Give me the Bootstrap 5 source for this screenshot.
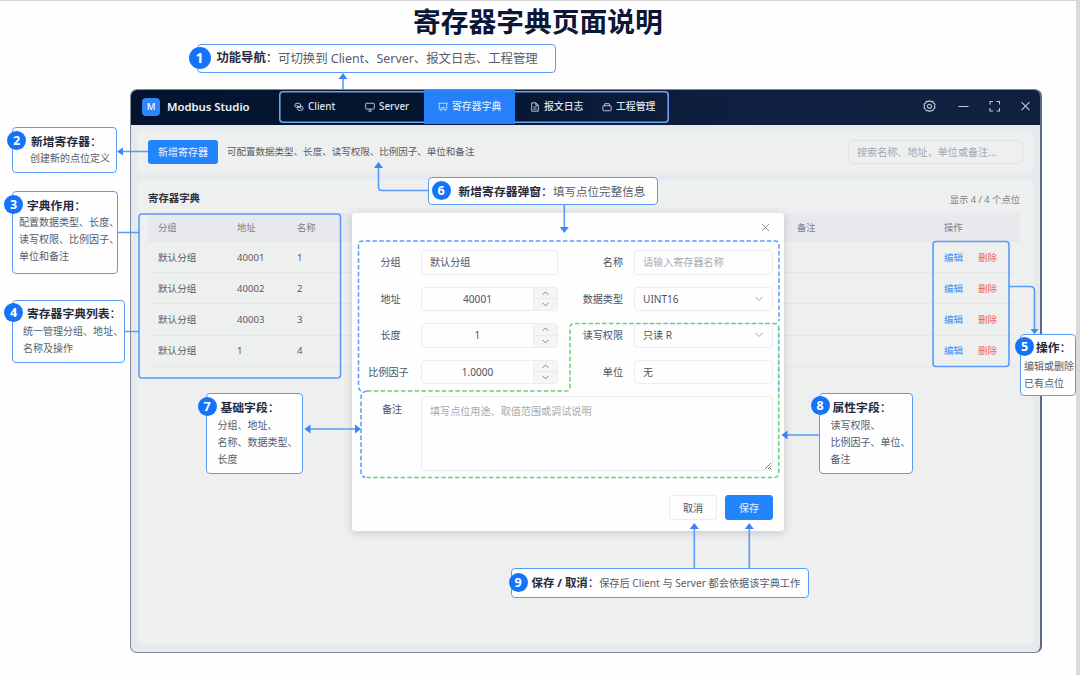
<!DOCTYPE html>
<html lang="zh-CN">
<head>
<meta charset="utf-8">
<meta name="viewport" content="width=device-width, initial-scale=1">
<title>寄存器字典页面说明</title>
<link href="https://cdn.jsdelivr.net/npm/bootstrap@5.3.0/dist/css/bootstrap.min.css" rel="stylesheet">
<style>
  :root { --line: #5b9bf8; --brand: #2385fb; --dot: #1473fb; }
  html, body { height: 675px; overflow: hidden; }
  body { font-family: "Noto Sans", "Noto Sans CJK SC", sans-serif; font-size: 9.6px; line-height: 1.4; color: #565b64; background: #fefefe; }
  .sheet { width: 1080px; height: 675px; border-top: 1px solid #d6d6d6; border-right: 4px solid #dadadb; padding-left: 130px; }
  .headline { font-size: 27.75px; font-weight: 700; line-height: 40px; color: #0c1635; margin: 0 0 48px 283px; }

  /* application window */
  .app { width: 912px; height: 564px; border: 1.5px solid #818a9c; border-right: 2px solid #5b6b85; border-radius: 7px; background: #e6e9ed; overflow: hidden; }
  .bar { height: 36px; margin: -1px -1px 0 -1px; background: linear-gradient(90deg, #04142f 0%, #06152f 35%, #102041 70%, #11203e 100%); color: #dfe5ef; }
  .logo { width: 18px; height: 18px; margin-left: 12px; border-radius: 4px; background: #2b87fb; color: #fff; font-size: 9.5px; font-weight: 500; }
  .product { width: 112px; margin-left: 7px; font-size: 11.3px; font-weight: 600; color: #f0f4fa; white-space: nowrap; }
  .tabs { width: 390px; height: 32px; font-size: 9.85px; font-weight: 500; box-shadow: inset 0 0 0 1.6px #6ea4ee; border-radius: 4px; }
  .tab { gap: 4px; padding-left: 15px; white-space: nowrap; }
  .tab svg { width: 10px; height: 10px; flex: none; }
  .t1 { width: 71px; } .t2 { width: 74px; } .t3 { width: 91px; } .t4 { width: 72px; }
  .t3 { height: 34px; padding-left: 14px; background: #2580fa; color: #d9eaff; border-radius: 0; }
  .sys { margin-right: 9px; color: #c3cad6; }
  .panel { background: #eeefef; border-radius: 4px; box-shadow: 0 0 2px #e9ebee; }
  .tools { height: 42px; margin: 6px 7px 0 6px; padding: 0 10px 0 11px; }
  .add { width: 70px; height: 24px; border-radius: 3px; background: var(--brand); color: #e8f2ff; font-size: 10px; }
  .hint { margin-left: 9px; font-size: 9.53px; }
  .find { width: 175px; height: 24px; border: 1px solid #e2e4e6; border-radius: 4px; padding-left: 8px; font-size: 10.1px; color: #a4a8ae; }
  .dict { height: 464px; margin: 7px 7px 0 6px; padding: 9px 13px 0 11px; }
  .dict h2 { font-size: 10.4px; font-weight: 700; color: #2c313c; line-height: 18px; }
  .total { padding-top: 4px; color: #7c8087; font-size: 9.3px; }
  .grid { grid-template-columns: 79px 60px 500px 147px 34px 1fr; padding: 1px 0 0 10px; height: 31.2px; border-bottom: 1px solid #e5e7e8; font-size: 9.6px; }
  .grid.hd { height: 29px; margin-top: 6px; background: #e8e9ec; color: #7c8087; font-size: 9.3px; }
  .ed { color: #3b8ef0; } .rm { color: #f26464; }

  /* dialog */
  .dlg { left: 352px; top: 213px; width: 432px; height: 318px; background: #fefefe; border-radius: 3px; box-shadow: 0 2px 9px rgba(60,70,90,.22); color: #4e535c; font-size: 10.1px; }
  .dlg .x { height: 37px; padding: 10px 14px 0 0; }
  .form { grid-template-columns: 61px 137px 76px 139px; grid-template-rows: repeat(4, 24.5px) 75px; row-gap: 12px; padding-left: 8px; }
  .lab { text-align: center; }
  .lab.r { text-align: right; padding-right: 11px; }
  .lab.top { align-self: start; padding: 6px 0 0 3px; }
  .fld { border: 1px solid #ebecee; border-radius: 4px; padding: 0 8px; background: #fefefe; }
  .ph { color: #a9abb0; }
  .num { padding: 0; overflow: hidden; }
  .step { width: 24px; background: #f5f5f6; border-left: 1px solid #eeeff0; color: #7b7f86; }
  .step svg + svg { border-top: 1px solid #e9eaec; }
  .area { grid-column: 2 / 5; position: relative; padding-top: 7px; }
  .area svg { position: absolute; right: 0; bottom: 0; }
  .act { gap: 8px; padding: 24px 11px 0 0; }
  .act span { width: 48px; height: 25px; border-radius: 3px; border: 1px solid #ececee; padding-top: 1px; }
  .act .ok { background: var(--brand); border-color: var(--brand); color: #e6f1ff; }

  /* annotations */
  .lines { left: 0; top: 0; pointer-events: none; }
  .note { background: #fefefe; border: 1.5px solid var(--line); border-radius: 4px; white-space: nowrap; font-size: 10.03px; line-height: 17px; color: #575c6b; }
  .note b { display: block; font-size: 11.8px; font-weight: 700; line-height: 18px; color: #242a3c; }
  .note b span { font-weight: 400; }
  .note i { position: absolute; width: 19px; height: 19px; border-radius: 50%; background: var(--dot); color: #fff; font: 700 12.5px/19px "Noto Sans", sans-serif; text-align: center; }
  .note.one { display: flex; align-items: center; }
  .n1 { left: 196.5px; top: 44px; width: 359px; height: 28.5px; padding-left: 19px; font-size: 12.4px; }
  .n1 b { font-size: 12.3px; } .n1 i { left: -9px; top: 2px; width: 22px; height: 22px; font-size: 14px; line-height: 22px; }
  .n2 { left: 12px; top: 127px; width: 105px; height: 46px; padding: 4px 0 0 17px; }
  .n2 b { margin-left: 1px; } .n2 i { left: -6px; top: 3px; }
  .n3 { left: 12px; top: 191px; width: 106px; height: 82.5px; padding: 4px 0 0 6px; }
  .n3 b, .n4 b { margin-left: 8px; } .n3 i { left: -9px; top: 3px; }
  .n4 { left: 12px; top: 300px; width: 113px; height: 62.5px; padding: 4px 0 0 10px; }
  .n4 b { margin: -1px 0 1px 4px; } .n4 i { left: -9px; top: 2px; }
  .n5 { left: 1020px; top: 334px; width: 56px; height: 61.5px; padding: 3px 0 0 3px; }
  .n5 b { margin: 0 0 2px 12px; } .n5 i { left: -6px; top: 2px; }
  .n6 { left: 427.5px; top: 177px; width: 230.5px; height: 28px; padding-left: 30px; font-size: 11.55px; }
  .n6 i { left: 3px; top: 3px; }
  .n7 { left: 205.5px; top: 393px; width: 97.5px; height: 80.5px; padding: 4px 0 0 11px; }
  .n7 b { margin: 0 0 1px 3px; } .n7 i { left: -9px; top: 3px; }
  .n8 { left: 818.5px; top: 393px; width: 94.5px; height: 80.5px; padding: 4px 0 0 11px; }
  .n8 b { margin: 0 0 1px 2px; } .n8 i { left: -9px; top: 2px; }
  .n9 { left: 510.5px; top: 568px; width: 298.5px; height: 29.5px; padding: 1px 0 0 20px; font-size: 10.2px; }
  .n9 b { font-size: 11.4px; } .n9 i { left: -3px; top: 4px; }
</style>
</head>
<body>
<main class="sheet position-relative">
  <h1 class="headline">寄存器字典页面说明</h1>

  <section class="app">
    <header class="bar d-flex align-items-center">
      <span class="logo d-flex align-items-center justify-content-center">M</span>
      <span class="product">Modbus Studio</span>
      <nav class="tabs d-flex align-items-center">
        <span class="tab t1 d-flex align-items-center"><svg viewBox="0 0 12 12" fill="none" stroke="currentColor"><rect x="1" y="1.5" width="7" height="5" rx="2.5"/><rect x="4" y="5" width="7" height="5" rx="2.5"/><path d="M3 4l6 4"/></svg>Client</span>
        <span class="tab t2 d-flex align-items-center"><svg viewBox="0 0 12 12" fill="none" stroke="currentColor"><rect x=".8" y="1.5" width="10.4" height="7" rx="1"/><path d="M4 11h4M6 8.5V11"/></svg>Server</span>
        <span class="tab t3 d-flex align-items-center"><svg viewBox="0 0 12 12" fill="none" stroke="currentColor"><path d="M.5 1.500h11M1.500 1.500V8.500h9v-7M4 6.500h4M3 11l1-2.500M9 11L8 8.500"/></svg>寄存器字典</span>
        <span class="tab t4 d-flex align-items-center"><svg viewBox="0 0 12 12" fill="none" stroke="currentColor"><path d="M2 1h5l3 3v7H2zM7 1v3h3M4 6h4M4 8.500h4"/></svg>报文日志</span>
        <span class="tab d-flex align-items-center"><svg viewBox="0 0 12 12" fill="none" stroke="currentColor"><rect x="1" y="4.500" width="10" height="6" rx="1"/><path d="M2.500 4.500l1-2.500h5l1 2.500"/></svg>工程管理</span>
      </nav>
      <svg class="sys ms-auto" width="110" height="16" viewBox="0 0 110 16" fill="none" stroke="currentColor" stroke-width="1.100">
        <path d="M7.500 1.700l1.500.9 1.700-.2.900 1.700 1.400 1.200-.6 1.900.6 1.700-1.500 1.200-.8 1.600-1.800-.1-1.400.9-1.500-.9-1.700.1-.9-1.600L2 8.900l.6-1.700L2 5.300l1.400-1.200.9-1.700 1.700.2z"/><circle cx="7.500" cy="7.200" r="2"/>
        <path d="M36.500 7.500h10"/>
        <path d="M68 5.500v-3h3M74.500 2.500h3v3M77.500 9v3h-3M71 12h-3V9"/>
        <path d="M99.500 3.200l8 8M107.500 3.200l-8 8"/>
      </svg>
    </header>

    <div class="panel tools d-flex align-items-center">
      <span class="add d-flex align-items-center justify-content-center">新增寄存器</span>
      <span class="hint">可配置数据类型、长度、读写权限、比例因子、单位和备注</span>
      <span class="find d-flex align-items-center ms-auto">搜索名称、地址、单位或备注...</span>
    </div>

    <div class="panel dict">
      <div class="d-flex justify-content-between"><h2 class="m-0">寄存器字典</h2><span class="total">显示 4 / 4 个点位</span></div>
      <div class="grid hd d-grid align-items-center"><span>分组</span><span>地址</span><span>名称</span><span>备注</span><span>操作</span></div>
      <div class="grid d-grid align-items-center"><span>默认分组</span><span>40001</span><span>1</span><span></span><span class="ed">编辑</span><span class="rm">删除</span></div>
      <div class="grid d-grid align-items-center"><span>默认分组</span><span>40002</span><span>2</span><span></span><span class="ed">编辑</span><span class="rm">删除</span></div>
      <div class="grid d-grid align-items-center"><span>默认分组</span><span>40003</span><span>3</span><span></span><span class="ed">编辑</span><span class="rm">删除</span></div>
      <div class="grid d-grid align-items-center"><span>默认分组</span><span>1</span><span>4</span><span></span><span class="ed">编辑</span><span class="rm">删除</span></div>
    </div>
  </section>
</main>

<section class="dlg position-absolute">
  <div class="x d-flex justify-content-end"><svg width="9" height="9" viewBox="0 0 9 9" stroke="#8d9097" stroke-width="1"><path d="M1 1l7 7M8 1L1 8"/></svg></div>
  <div class="form d-grid align-items-center">
    <span class="lab">分组</span><span class="fld h-100 d-flex align-items-center">默认分组</span>
    <span class="lab r">名称</span><span class="fld h-100 d-flex align-items-center ph">请输入寄存器名称</span>

    <span class="lab">地址</span><span class="fld num h-100 d-flex"><span class="flex-grow-1 d-flex align-items-center justify-content-center">40001</span><span class="step d-flex flex-column"><svg class="flex-fill w-100" viewBox="0 0 24 11" fill="none" stroke="currentColor"><path d="M9 7l3-3 3 3"/></svg><svg class="flex-fill w-100" viewBox="0 0 24 11" fill="none" stroke="currentColor"><path d="M9 4l3 3 3-3"/></svg></span></span>
    <span class="lab r">数据类型</span><span class="fld h-100 d-flex align-items-center justify-content-between">UINT16<svg width="10" height="6" viewBox="0 0 10 6" fill="none" stroke="#a0a3a9"><path d="M1.500 1L5 4.500 8.500 1"/></svg></span>

    <span class="lab">长度</span><span class="fld num h-100 d-flex"><span class="flex-grow-1 d-flex align-items-center justify-content-center">1</span><span class="step d-flex flex-column"><svg class="flex-fill w-100" viewBox="0 0 24 11" fill="none" stroke="currentColor"><path d="M9 7l3-3 3 3"/></svg><svg class="flex-fill w-100" viewBox="0 0 24 11" fill="none" stroke="currentColor"><path d="M9 4l3 3 3-3"/></svg></span></span>
    <span class="lab r">读写权限</span><span class="fld h-100 d-flex align-items-center justify-content-between">只读 R<svg width="10" height="6" viewBox="0 0 10 6" fill="none" stroke="#a0a3a9"><path d="M1.500 1L5 4.500 8.500 1"/></svg></span>

    <span class="lab pe-1">比例因子</span><span class="fld num h-100 d-flex"><span class="flex-grow-1 d-flex align-items-center justify-content-center">1.0000</span><span class="step d-flex flex-column"><svg class="flex-fill w-100" viewBox="0 0 24 11" fill="none" stroke="currentColor"><path d="M9 7l3-3 3 3"/></svg><svg class="flex-fill w-100" viewBox="0 0 24 11" fill="none" stroke="currentColor"><path d="M9 4l3 3 3-3"/></svg></span></span>
    <span class="lab r">单位</span><span class="fld h-100 d-flex align-items-center ps-1"><span class="ms-1">无</span></span>

    <span class="lab top">备注</span><span class="fld area h-100 ph">填写点位用途、取值范围或调试说明<svg width="8" height="8" viewBox="0 0 8 8" stroke="#77797e"><path d="M1 7l6-6M4 7l3-3M6 7l1-1"/></svg></span>
  </div>
  <div class="act d-flex justify-content-end"><span class="d-flex align-items-center justify-content-center">取消</span><span class="ok d-flex align-items-center justify-content-center">保存</span></div>
</section>

<!-- connector lines and highlighted regions -->
<svg class="lines position-absolute" width="1080" height="675" viewBox="0 0 1080 675" fill="none" stroke="#5b9bf8" stroke-width="1.600">
  <rect x="139" y="214" width="201.500" height="164" rx="3"/>
  <rect x="933" y="241.500" width="76" height="125" rx="3"/>
  <path d="M343 90V78M148 151.500H121M118 232.500h21M125 331.500h14M1009 286.500h21q4.500 0 4.500 4.500v39M428 190.500h-46q-3.500 0-3.500-3.500V166M564.300 205v24M308 429h49M819 435h-34M694.300 568V528M749.300 568V528"/>
  <g fill="#3e83f7" stroke="none">
    <path d="M343 73l4.500 6h-9zM117 151.500l6-4v8zM1034.500 334l-4-5h8zM378.500 162l4.500 6h-9zM564.300 233l-4.500-6h9zM304.500 429l6-4.500v9zM361 429l-6-4.500v9zM781.500 435l6-4.500v9zM694.300 523l4.500 6h-9zM749.300 523l4.500 6h-9z"/>
  </g>
  <g stroke-dasharray="4.500 2.300" stroke-width="1.500">
    <path d="M361 391q-2.500-1-2.500-5V245q0-4 4-4H775q4 0 4 4v76"/>
    <path d="M367 391q-6 1-6 6v75q0 4 4 5.500"/>
    <path stroke="#69cf7c" d="M367 391H566q4 0 4-4V328q0-4.500 4-4.500H774q4.700 0 4.700 4.500V473q0 4.500-4.500 4.500H365"/>
    <path stroke-dasharray="3 3.800" stroke-opacity=".7" d="M778.700 328v66"/>
  </g>
</svg>

<aside class="note one n1 position-absolute"><i>1</i><b>功能导航<span>：</span></b>可切换到 Client、Server、报文日志、工程管理</aside>
<aside class="note n2 position-absolute"><i>2</i><b>新增寄存器<span>：</span></b>创建新的点位定义</aside>
<aside class="note n3 position-absolute"><i>3</i><b>字典作用<span>：</span></b>配置数据类型、长度、<br>读写权限、比例因子、<br>单位和备注</aside>
<aside class="note n4 position-absolute"><i>4</i><b>寄存器字典列表<span>：</span></b>统一管理分组、地址、<br>名称及操作</aside>
<aside class="note n5 position-absolute"><i>5</i><b>操作<span>：</span></b>编辑或删除<br>已有点位</aside>
<aside class="note one n6 position-absolute"><i>6</i><b>新增寄存器弹窗<span>：</span></b>填写点位完整信息</aside>
<aside class="note n7 position-absolute"><i>7</i><b>基础字段<span>：</span></b>分组、地址、<br>名称、数据类型、<br>长度</aside>
<aside class="note n8 position-absolute"><i>8</i><b>属性字段<span>：</span></b>读写权限、<br>比例因子、单位、<br>备注</aside>
<aside class="note one n9 position-absolute"><i>9</i><b>保存 / 取消<span>：</span></b>保存后 Client 与 Server 都会依据该字典工作</aside>
<script src="https://cdn.jsdelivr.net/npm/bootstrap@5.3.0/dist/js/bootstrap.bundle.min.js"></script>
</body>
</html>
